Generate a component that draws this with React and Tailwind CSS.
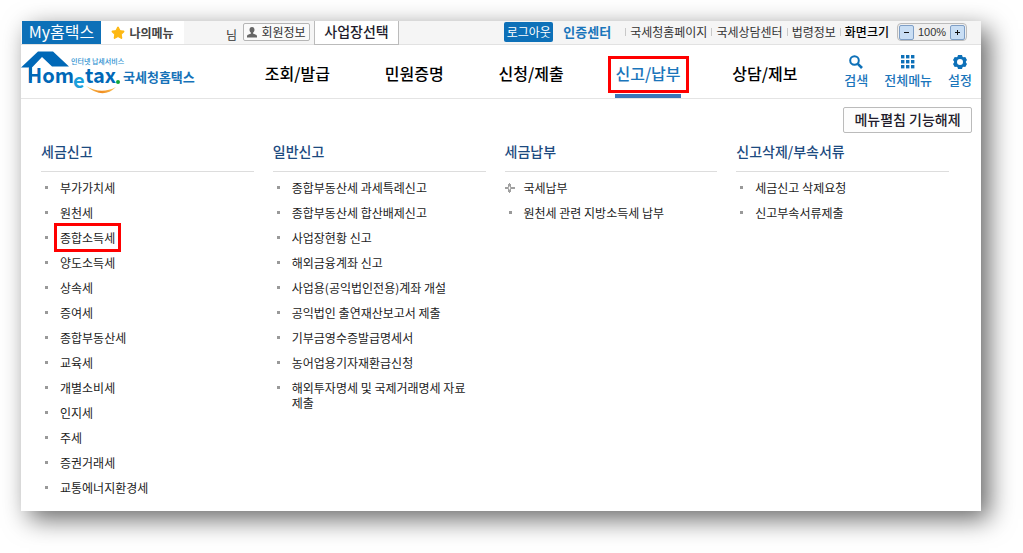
import { Star } from 'lucide-react';
import clsx from 'clsx';

const NAV_ITEMS = [
  { label: '조회/발급' },
  { label: '민원증명' },
  { label: '신청/제출' },
  { label: '신고/납부', active: true },
  { label: '상담/제보' },
];

const UTIL_LINKS = ['국세청홈페이지', '국세상담센터', '법령정보'];

const MENU_COLUMNS = [
  {
    title: '세금신고',
    items: [
      { label: '부가가치세' },
      { label: '원천세' },
      { label: '종합소득세', marked: true },
      { label: '양도소득세' },
      { label: '상속세' },
      { label: '증여세' },
      { label: '종합부동산세' },
      { label: '교육세' },
      { label: '개별소비세' },
      { label: '인지세' },
      { label: '주세' },
      { label: '증권거래세' },
      { label: '교통에너지환경세' },
    ],
  },
  {
    title: '일반신고',
    items: [
      { label: '종합부동산세 과세특례신고' },
      { label: '종합부동산세 합산배제신고' },
      { label: '사업장현황 신고' },
      { label: '해외금융계좌 신고' },
      { label: '사업용(공익법인전용)계좌 개설' },
      { label: '공익법인 출연재산보고서 제출' },
      { label: '기부금영수증발급명세서' },
      { label: '농어업용기자재환급신청' },
      { label: '해외투자명세 및 국제거래명세 자료 제출' },
    ],
  },
  {
    title: '세금납부',
    items: [
      { label: '국세납부', expandable: true },
      { label: '원천세 관련 지방소득세 납부' },
    ],
  },
  {
    title: '신고삭제/부속서류',
    items: [{ label: '세금신고 삭제요청' }, { label: '신고부속서류제출' }],
  },
];

function Logo() {
  return (
    <svg width="180" height="46" viewBox="0 0 180 46" role="img" aria-label="Hometax 국세청홈택스">
      <defs>
        <linearGradient id="smile" x1="0" x2="1">
          <stop offset="0" stopColor="#f9c45a" />
          <stop offset="0.5" stopColor="#f08c1e" />
          <stop offset="1" stopColor="#f9c45a" />
        </linearGradient>
      </defs>
      {/* roof */}
      <path d="M0 18.500 17 2.500H32L48 17.500H31L21 8 11 18.500Z" fill="#0068b7" />
      <path d="M8 17h3v14H8z" fill="#0068b7" />
      <text x="50" y="15" fontSize="7" fontWeight="500" fill="#2a8fd0">인터넷 납세서비스</text>
      <g fontWeight="700" fill="#0068b7">
        <text x="6" y="34" fontSize="20">Hom</text>
        <text x="52" y="39" fontSize="20" fill="#1ba0dc">e</text>
        <text x="64" y="34" fontSize="20">tax</text>
      </g>
      <circle cx="97" cy="33" r="2" fill="#13a538" />
      <path d="M65 37Q80 46 95 38Q82 51 65 37Z" fill="url(#smile)" />
      <text x="102" y="33" fontSize="13" fontWeight="700" fill="#1672b8">국세청홈택스</text>
    </svg>
  );
}

function PersonIcon() {
  return (
    <svg width="10" height="11" viewBox="0 0 10 11" fill="#666">
      <path d="M5 0C3.300 0 2.500 1.200 2.500 2.800 2.500 4.200 3.200 5.300 4 5.800V6.600L1 7.800C.3 8.100 0 8.600 0 9.500V10.500H10V9.500C10 8.600 9.700 8.100 9 7.800L6 6.600V5.800C6.800 5.300 7.500 4.200 7.500 2.800 7.500 1.200 6.700 0 5 0Z" />
    </svg>
  );
}

function SearchIcon() {
  return (
    <svg width="14" height="14" viewBox="0 0 14 14" fill="none" stroke="#0d70b8">
      <circle cx="5.500" cy="5.500" r="4.300" strokeWidth="2" />
      <path d="M8.800 8.800 13 13" strokeWidth="2.600" />
    </svg>
  );
}

function GridIcon() {
  return (
    <svg width="14" height="14" viewBox="0 0 14 14" fill="#0d70b8">
      {[0, 5, 10].map((y) => [0, 5, 10].map((x) => <rect key={`${x}-${y}`} x={x} y={y} width="3.400" height="3.400" />))}
    </svg>
  );
}

function GearIcon() {
  return (
    <svg width="14" height="14" viewBox="0 0 14 14" fill="#0d70b8">
      <path
        fillRule="evenodd"
        d="M5 0H9L9.500 1.700 10.600 2.300 12.300 1.900 14 5 12.900 6.400V7.600L14 9 12.300 12.100 10.600 11.700 9.500 12.300 9 14H5L4.500 12.300 3.400 11.700 1.700 12.100 0 9 1.100 7.600V6.400L0 5 1.700 1.900 3.400 2.300 4.500 1.700ZM7 4A3 3 0 1 0 7 10A3 3 0 1 0 7 4Z"
      />
    </svg>
  );
}

function Divider() {
  return <span className="h-2 w-px bg-[#c8c8c8]" />;
}

function TopBar() {
  return (
    <div className="flex h-6 items-start border-b border-[#e2e2e2] bg-[#f5f5f5] pr-3.5 text-xs text-[#333]">
      <a href="#my" className="ml-px flex h-[23px] w-[79px] items-start justify-center bg-[#0d70b8] text-base leading-5 text-white">
        My홈택스
      </a>
      <a href="#mymenu" className="flex h-[23px] w-[83px] items-center justify-center gap-1 bg-white font-bold text-[#444]">
        <Star size={14} fill="#fdb813" stroke="#fdb813" />
        나의메뉴
      </a>
      <span className="ml-[42px] pt-1 leading-5">님</span>
      <button
        type="button"
        className="mt-0.5 ml-1.5 flex h-[18px] w-[67px] items-center justify-center gap-1 rounded-xs border border-[#b5b5b5] bg-[#fafafa] leading-4"
      >
        <PersonIcon />
        회원정보
      </button>
      <button type="button" className="ml-1 flex h-6 w-[85px] justify-center border border-t-0 border-[#bbb] bg-white text-sm leading-5 font-medium text-[#221c2c]">
        사업장선택
      </button>

      <div className="ml-auto flex h-[22px] items-center">
        <button type="button" className="h-5 w-[49px] rounded-xs bg-[#0d70b8] leading-5 text-white">
          로그아웃
        </button>
        <a href="#cert" className="mr-3.5 ml-2.5 text-[13px] font-bold text-[#1a75bb]">
          인증센터
        </a>
        {UTIL_LINKS.map((label) => (
          <span key={label} className="flex items-center">
            <Divider />
            <a href="#util" className="mr-1 ml-1">
              {label}
            </a>
          </span>
        ))}
        <Divider />
        <span className="ml-1 font-medium text-black">화면크기</span>
        <div className="ml-2 flex h-[18px] w-[70px] items-center justify-between rounded-sm border border-[#bbb] bg-[#f0f0f0] px-px">
          <button type="button" aria-label="축소" className="flex size-[15px] items-center justify-center rounded-xs border border-[#7f9fc6] bg-[#c9def4]">
            <svg width="5" height="5" viewBox="0 0 5 5" fill="#111">
              <path d="M0 2h5v1H0z" />
            </svg>
          </button>
          <span className="text-[11px] leading-4 font-[Liberation_Sans,sans-serif]">100%</span>
          <button type="button" aria-label="확대" className="flex size-[15px] items-center justify-center rounded-xs border border-[#7f9fc6] bg-[#c9def4]">
            <svg width="5" height="5" viewBox="0 0 5 5" fill="#111">
              <path d="M0 2h5v1H0zM2 0h1v5H2z" />
            </svg>
          </button>
        </div>
      </div>
    </div>
  );
}

function Header() {
  return (
    <header className="flex h-[54px] border-b border-[#e4e4e4]">
      <a href="#home" className="w-[218px] shrink-0 pt-1">
        <Logo />
      </a>
      <nav className="grid flex-1 grid-cols-5">
        {NAV_ITEMS.map(({ label, active }) => (
          <a
            key={label}
            href="#nav"
            className={clsx('relative flex justify-center text-base leading-5 font-medium', active ? 'text-[#1a75bb]' : 'text-black')}
          >
            <span className={clsx('h-[53px] pt-[18px]', active && 'border-b-4 border-[#3b77b9]')}>{label}</span>
            {active && <span className="absolute top-[11px] h-[37px] w-[81px] border-3 border-[#f00]" />}
          </a>
        ))}
      </nav>
      <div className="ml-[21px] flex gap-4 pt-2.5 pr-[9px] text-[13px] leading-5 font-medium text-[#1a75bb]">
        <button type="button" className="flex flex-col items-center gap-px">
          <SearchIcon />
          검색
        </button>
        <button type="button" className="flex flex-col items-center gap-px">
          <GridIcon />
          전체메뉴
        </button>
        <button type="button" className="flex flex-col items-center gap-px">
          <GearIcon />
          설정
        </button>
      </div>
    </header>
  );
}

function MenuItem({ label, marked, expandable }) {
  return (
    <li className="flex">
      <span className="flex h-[15px] w-[19px] shrink-0 items-center">
        {expandable ? (
          <svg width="10" height="10" viewBox="0 0 10 10" fill="none" stroke="#888">
            <path d="M0 4.500h3.500V1M4.500 0v3.500M5.500 1v3.500H10M0 5.500h3.500V9M4.500 10V6.500M5.500 9V5.500H10" strokeWidth="0.800" />
          </svg>
        ) : (
          <span className="ml-1 size-[3px] bg-[#999]" />
        )}
      </span>
      <a href="#menu" className="relative break-keep">
        {label}
        {marked && <span className="absolute -inset-x-1.5 -inset-y-[7px] border-3 border-[#f00]" />}
      </a>
    </li>
  );
}

export default function App() {
  return (
    <main className="pt-[21px] pr-[42px] pb-[42px] pl-[21px] font-['Noto_Sans_CJK_KR',sans-serif]">
      <div className="bg-white shadow-[8px_8px_24px_rgba(0,0,0,0.6)]">
        <TopBar />
        <Header />
        <div className="pt-2 pb-4">
          <div className="flex justify-end pr-[9px]">
            <button type="button" className="h-[26px] w-[129px] rounded-xs border border-[#bbb] bg-[#fdfdfd] pb-0.5 text-sm leading-5 font-medium text-[#221c2c]">
              메뉴펼침 기능해제
            </button>
          </div>
          <div className="mt-2 grid grid-cols-4 gap-x-[19px] pr-8 pl-5">
            {MENU_COLUMNS.map(({ title, items }) => (
              <section key={title}>
                <h2 className="border-b border-[#ddd] pb-2.5 text-sm leading-5 font-medium text-[#1c4a80]">{title}</h2>
                <ul className="flex flex-col gap-2.5 pt-2 text-xs leading-[15px] text-[#222]">
                  {items.map((item) => (
                    <MenuItem key={item.label} {...item} />
                  ))}
                </ul>
              </section>
            ))}
          </div>
        </div>
      </div>
    </main>
  );
}
